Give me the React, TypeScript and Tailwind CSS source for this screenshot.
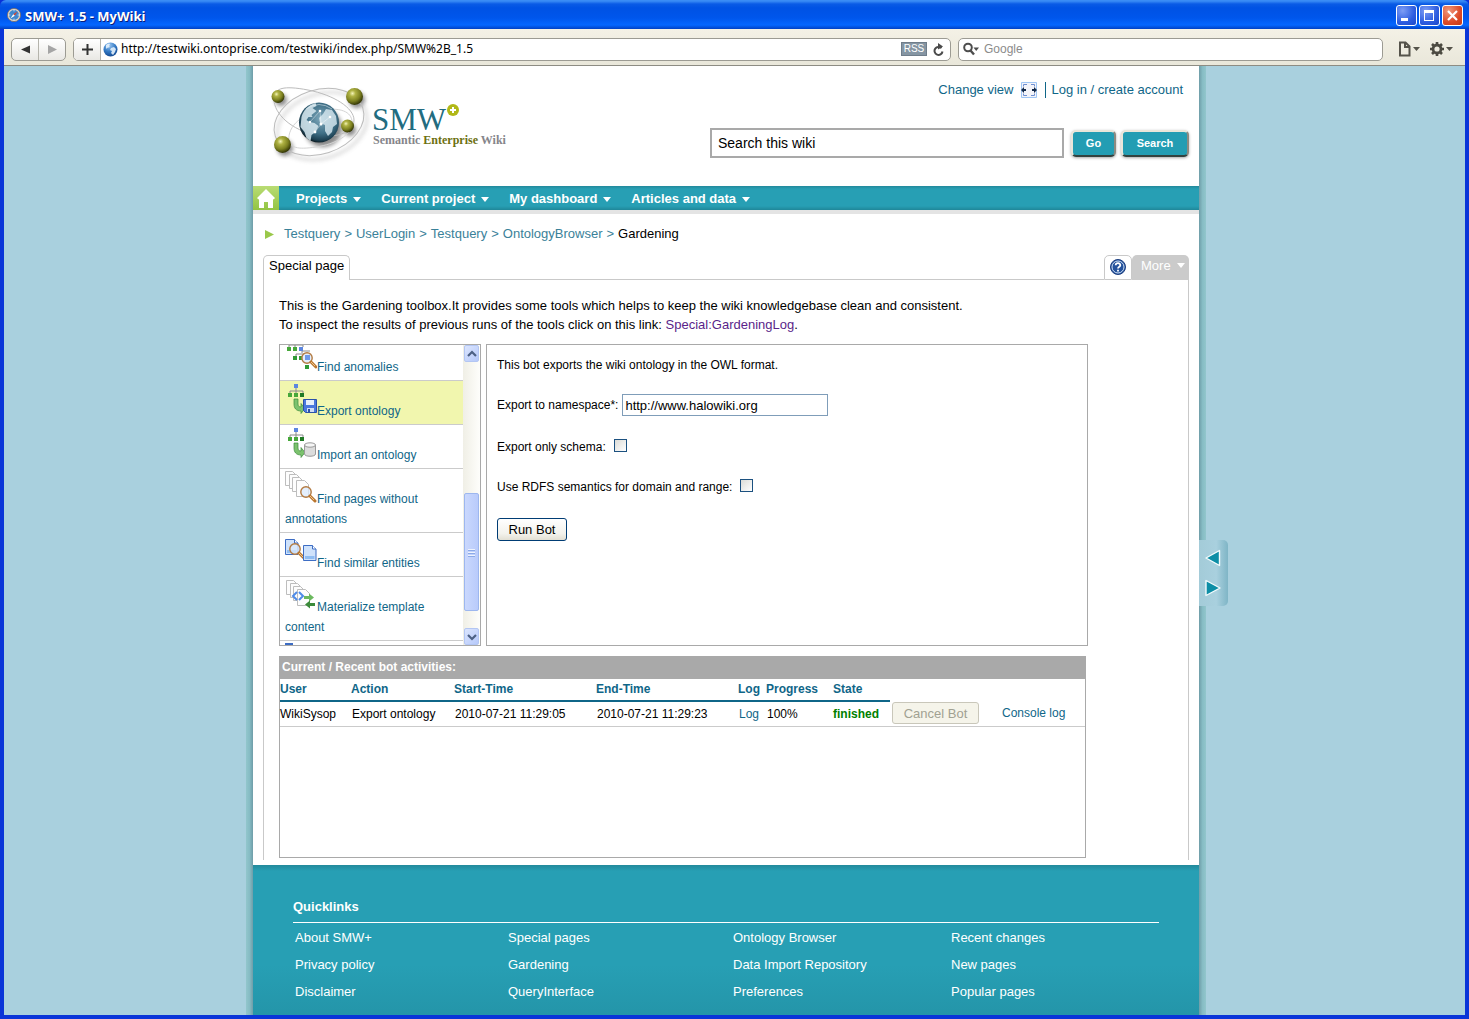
import type { ReactNode } from "react";

const linkColor = "text-[#0f6688]";

function Caret({ className = "" }: { className?: string }) {
  return (
    <svg width="8" height="5" viewBox="0 0 8 5" className={className} aria-hidden="true">
      <path d="M0 0h8L4 5z" fill="currentColor" />
    </svg>
  );
}

function CompassIcon() {
  return (
    <svg width="14" height="14" viewBox="0 0 14 14" aria-hidden="true">
      <circle cx="7" cy="7" r="6.6" fill="#d9d5cf" stroke="#7a6f68" strokeWidth="0.8" />
      <circle cx="7" cy="7" r="5" fill="#3f87cf" />
      <path d="M7 2v1.4M7 10.6V12M2 7h1.4M10.600 7H12" stroke="#e3eefa" strokeWidth="0.8" />
      <path d="M10.500 3.500 7.800 7.800 6.200 6.200z" fill="#d8452f" />
      <path d="M3.500 10.500 7.800 7.800 6.200 6.200z" fill="#fff" />
    </svg>
  );
}

function TitleBar() {
  return (
    <header className="flex h-[29px] items-center justify-between rounded-t-md bg-[linear-gradient(#3a8cf5_0,#3a8cf5_1px,#0a5be6_4px,#0052e4_8px,#0056ec_18px,#0567ff_25px,#0141c4_29px)] pl-[7px] pr-1.5">
      <div className="flex items-center gap-1">
        <CompassIcon />
        <h1 className="pt-0.5 font-['Open_Sans'] text-[13px] leading-4 font-bold text-white [text-shadow:1px_1px_0_#0b1d7a]">
          SMW+ 1.5 - MyWiki
        </h1>
      </div>
      <div className="flex gap-0.5 pt-0.5">
        <button aria-label="Minimize" className="h-[21px] w-[21px] rounded-[3px] border border-white bg-[radial-gradient(circle_at_30%_25%,#7d9df5,#2e5de0_60%,#1c48c9)]">
          <svg width="19" height="19" viewBox="0 0 19 19">
            <path d="M4 12h7v3H4z" fill="#fff" />
          </svg>
        </button>
        <button aria-label="Maximize" className="h-[21px] w-[21px] rounded-[3px] border border-white bg-[radial-gradient(circle_at_30%_25%,#7d9df5,#2e5de0_60%,#1c48c9)]">
          <svg width="19" height="19" viewBox="0 0 19 19">
            <path d="M4 4h10v11H4zM5 7v7h8V7z" fill="#fff" fillRule="evenodd" />
          </svg>
        </button>
        <button aria-label="Close" className="h-[21px] w-[21px] rounded-[3px] border border-white bg-[radial-gradient(circle_at_30%_25%,#f0997d,#dd4a27_60%,#c53a14)]">
          <svg width="19" height="19" viewBox="0 0 19 19">
            <path d="m5 5 9 9M14 5l-9 9" stroke="#fff" strokeWidth="2.200" />
          </svg>
        </button>
      </div>
    </header>
  );
}

function GlobeIcon() {
  return (
    <svg width="15" height="15" viewBox="0 0 15 15" aria-hidden="true">
      <defs>
        <radialGradient id="globe-small" cx="0.4" cy="0.2" r="0.9">
          <stop offset="0" stopColor="#9cc8f2" />
          <stop offset="0.5" stopColor="#3379c4" />
          <stop offset="1" stopColor="#0d3f86" />
        </radialGradient>
      </defs>
      <circle cx="7.500" cy="7.500" r="7" fill="url(#globe-small)" />
      <path d="M3 3c2-1.500 3-1.500 4-1l-1 2 1 1-3 1-1 1zM8 6l3-1 2 2-1 3-2 3-2-2 1-2-2-1z" fill="#e4f1fb" opacity="0.9" />
    </svg>
  );
}

function Toolbar() {
  return (
    <div className="flex h-[37px] items-center border-b border-[#8d8c83] bg-[linear-gradient(#f4f1e6,#e9e7da)] px-[7px] pt-1">
      <div className="flex h-[23px] w-[55px] divide-x divide-[#b5b4ac] rounded-[5px] border border-[#9c9b93] bg-[linear-gradient(#fff,#e9e8e4)]">
        <button aria-label="Back" className="flex flex-1 items-center justify-center">
          <svg width="9" height="9" viewBox="0 0 10 9"><path d="M10 0v9L0 4.500z" fill="#333" /></svg>
        </button>
        <button aria-label="Forward" className="flex flex-1 items-center justify-center">
          <svg width="9" height="9" viewBox="0 0 9 9"><path d="M0 0v9l9-4.500z" fill="#a5a5a5" /></svg>
        </button>
      </div>
      <div className="ml-[7px] flex h-[23px] w-[878px] items-center overflow-hidden rounded-[5px] border border-[#9c9b93] bg-white">
        <button aria-label="Add bookmark" className="flex h-full w-[27px] items-center justify-center border-r border-[#b5b4ac] bg-[linear-gradient(#fff,#e9e8e4)]">
          <svg width="11" height="11" viewBox="0 0 11 11"><path d="M5.500 0v11M0 5.500h11" stroke="#333" strokeWidth="2" /></svg>
        </button>
        <span className="pl-0.5"><GlobeIcon /></span>
        <input aria-label="Address" defaultValue="http://testwiki.ontoprise.com/testwiki/index.php/SMW%2B_1.5" className="min-w-0 flex-1 bg-transparent pl-[3px] font-['Noto_Sans'] text-[12px] leading-5 text-black outline-none" />
        <button className="h-[14px] w-[26px] border border-[#6f7d8a] bg-[#8595a3] text-[10px] leading-3 text-white">RSS</button>
        <button aria-label="Reload" className="ml-1.5 mr-1.5">
          <svg width="11" height="13" viewBox="0 0 11 13">
            <path d="M8.500 5.200A4 4 0 1 0 9.500 8.500" fill="none" stroke="#4a4a4a" strokeWidth="2" />
            <path d="M5 0l5 3.500L5 6.500z" fill="#4a4a4a" />
          </svg>
        </button>
      </div>
      <div className="ml-[7px] flex h-[23px] flex-1 items-center rounded-[5px] border border-[#9c9b93] bg-white pl-1">
        <svg width="16" height="14" viewBox="0 0 16 14" aria-hidden="true">
          <circle cx="5" cy="5.500" r="3.800" fill="none" stroke="#4d4d4d" strokeWidth="2" />
          <path d="m7.500 8.500 3.500 4" stroke="#4d4d4d" strokeWidth="2.400" />
          <path d="M10.500 5.500H16L13.200 9z" fill="#4d4d4d" />
        </svg>
        <input aria-label="Web search" placeholder="Google" className="min-w-0 flex-1 bg-transparent pl-[5px] text-[12px] leading-5 outline-none placeholder:text-[#8b8b8b]" />
      </div>
      <div className="flex items-center gap-2 pl-4 pr-[5px]">
        <button aria-label="Page menu">
          <svg width="22" height="16" viewBox="0 0 22 16">
            <path d="M1 1.500h5.500l4 4v9H1z M6 1.500v4.500h4.500" fill="none" stroke="#55534a" strokeWidth="2" />
            <path d="M14 6h7l-3.500 4z" fill="#55534a" />
          </svg>
        </button>
        <button aria-label="Settings menu">
          <svg width="24" height="16" viewBox="0 0 24 16">
            <circle cx="8" cy="8" r="4" fill="none" stroke="#4d4b42" strokeWidth="2.800" />
            <path d="M8 1v2.500M8 12.500V15M1 8h2.500M12.500 8H15M3 3l2 2M11 11l2 2M13 3l-2 2M5 11l-2 2" stroke="#4d4b42" strokeWidth="2.600" />
            <path d="M17 6h7l-3.500 4z" fill="#55534a" />
          </svg>
        </button>
      </div>
    </div>
  );
}

function AtomLogo() {
  return (
    <svg width="104" height="84" viewBox="0 0 104 84" aria-hidden="true">
      <defs>
        <radialGradient id="olive" cx="0.38" cy="0.32" r="0.7">
          <stop offset="0" stopColor="#f3f3b8" />
          <stop offset="0.25" stopColor="#b0b344" />
          <stop offset="0.65" stopColor="#7c8020" />
          <stop offset="1" stopColor="#2e3104" />
        </radialGradient>
        <radialGradient id="earth" cx="0.55" cy="0.4" r="0.62">
          <stop offset="0" stopColor="#7fa9bc" />
          <stop offset="0.6" stopColor="#3f6f86" />
          <stop offset="0.88" stopColor="#1d4052" />
          <stop offset="1" stopColor="#081419" />
        </radialGradient>
        <filter id="soft" x="-30%" y="-30%" width="170%" height="170%">
          <feGaussianBlur stdDeviation="2" />
        </filter>
      </defs>
      <g filter="url(#soft)" opacity="0.45">
        <ellipse cx="54" cy="44" rx="46" ry="32" transform="rotate(-18 54 44)" fill="none" stroke="#888" strokeWidth="2" />
        <circle cx="13" cy="18" r="6" />
        <circle cx="89" cy="18" r="8" />
        <circle cx="82" cy="48" r="6" />
        <circle cx="17" cy="66" r="8" />
        <circle cx="55" cy="46" r="19" />
      </g>
      <g fill="none" stroke="#bcbcbc">
        <ellipse cx="51" cy="40" rx="46" ry="32" transform="rotate(-18 51 40)" />
        <path d="M6 14c-2 15 14 32 38 38s42-2 42-14S66 13 40 8 8 7 6 14z" />
        <path d="M21 59c-2-15 14-28 34-31s30 3 29 14-16 20-36 23-25 0-27-6z" stroke="#d4d4d4" />
      </g>
      <circle cx="51" cy="40.500" r="20" fill="url(#earth)" />
      <path d="M33.500 35c2-7 7-12 14-14l1 3-4 2 4 3-5 4 1 2-4 0-2 3 3 2 5 1 4 3-3 6-4 3-1 6-4-3-2-6-4-5z" fill="#d9eaf1" opacity="0.85" />
      <path d="M55 32l3-5 6 1 4 6 1 8-4 3-1 5-4 4-3-5v-6l-5-2-1-5z" fill="#d9eaf1" opacity="0.8" />
      <path d="M38 27q13-9 26 0" stroke="#edf7fb" fill="none" opacity="0.5" />
      <g fill="#fff">
        <circle cx="52" cy="29" r="1.300" />
        <circle cx="53" cy="42" r="1.500" />
        <circle cx="47" cy="50" r="1.400" />
        <circle cx="62" cy="35" r="1.300" />
        <circle cx="42" cy="40" r="1.200" />
      </g>
      <path d="m52 29 1 13 9-7M53 42l-6 8M42 40l10-11" stroke="#fff" strokeWidth="0.500" fill="none" opacity="0.800" />
      <g fill="url(#olive)">
        <circle cx="10" cy="14.500" r="6.500" />
        <circle cx="86.500" cy="14.500" r="8.500" />
        <circle cx="79.500" cy="44" r="6.500" />
        <circle cx="14.500" cy="62.500" r="8.500" />
      </g>
    </svg>
  );
}

function Logo() {
  return (
    <a href="#home" className="flex items-start pl-[15px] pt-4 font-['Liberation_Serif']">
      <AtomLogo />
      <span className="block pt-6">
        <span className="flex items-start text-[31px] leading-7 text-[#226c80]">
          SMW
          <svg width="12" height="12" viewBox="0 0 12 12" className="-mt-0.5 ml-px" aria-hidden="true">
            <circle cx="6" cy="6" r="6" fill="#b1b817" />
            <path d="M6 3v6M3 6h6" stroke="#fff" strokeWidth="2" />
          </svg>
        </span>
        <span className="block pl-px text-[12px] leading-3 font-bold text-[#85858a]">
          Semantic <span className="text-[#6c7010]">Enterprise</span> Wiki
        </span>
      </span>
    </a>
  );
}

function TealButton({ children, className }: { children: ReactNode; className: string }) {
  return (
    <button className={`h-[27px] rounded-[5px] border-2 border-t-[#e9e6da] border-r-[#8d8a80] border-b-[#33423f] border-l-[#e9e6da] bg-[#239db3] text-[11px] font-bold text-white shadow-[0_1px_3px_rgba(0,0,0,0.35)] ${className}`}>
      {children}
    </button>
  );
}

function PageHeader() {
  return (
    <div className="flex h-[120px] justify-between">
      <Logo />
      <div className="flex flex-col items-end pt-3.5 pr-2.5">
        <div className={`flex items-center pr-1.5 text-[13px] leading-5 ${linkColor}`}>
          <a href="#view" className="flex items-center gap-2">
            Change view
            <svg width="16" height="16" viewBox="0 0 16 16" aria-hidden="true">
              <path d="M0.500 0.500h15v15H.5z" fill="#f3f4fa" stroke="#9fc6f5" />
              <path d="M2.500 4.500V2.500H6M10 2.500h3.500v2M13.500 11.500v2H10M6 13.500H2.500v-2" fill="none" stroke="#6f8fd0" />
              <path d="M0 8l3-3v2h2v2H3v2zM16 8l-3-3v2h-2v2h2v2z" fill="#12294a" />
            </svg>
          </a>
          <a href="#login" className="ml-2 border-l border-[#0f6688] pl-[5px] leading-4">Log in / create account</a>
        </div>
        <form className="mt-7 flex items-center gap-[5px]" onSubmit={(event) => event.preventDefault()}>
          <input aria-label="Search this wiki" defaultValue="Search this wiki" className="mr-0.5 h-[30px] w-[354px] border-2 border-[#a9a9a9] px-1.5 text-[14px] text-black outline-none" />
          <TealButton className="w-[45px]">Go</TealButton>
          <TealButton className="w-[68px]">Search</TealButton>
        </form>
      </div>
    </div>
  );
}

const navItems = ["Projects", "Current project", "My dashboard", "Articles and data"];

function MainNav() {
  return (
    <nav className="flex h-7 items-stretch border-b-4 border-[#e4e4e4] bg-[linear-gradient(#23899b_0,#279fb4_3px,#279fb4_20px,#1f8799_24px)]">
      <a href="#home" aria-label="Home" className="flex w-[26px] items-center justify-center bg-[linear-gradient(#b9dc74,#93c443)]">
        <svg width="18" height="19" viewBox="0 0 18 19">
          <path d="M9 0l9 9-1.500 1.500-.5-.4V19h-5v-6H7v6H2v-8.900l-.5.400L0 9z" fill="#fff" />
        </svg>
      </a>
      <ul className="flex items-center gap-5 pt-0.5 pl-[17px] text-[13px] font-bold text-white">
        {navItems.map((item) => (
          <li key={item}>
            <button className="flex items-center gap-1.5">
              {item}
              <Caret />
            </button>
          </li>
        ))}
      </ul>
    </nav>
  );
}

const trail = ["Testquery", "UserLogin", "Testquery", "OntologyBrowser"];

function Breadcrumb() {
  return (
    <nav aria-label="Breadcrumb" className="flex h-[41px] items-center pl-3 pb-px text-[13px] text-[#3a8199]">
      <svg width="9" height="9" viewBox="0 0 9 9" className="mr-2.5" aria-hidden="true">
        <path d="M0 0v9l9-4.500z" fill="#9ac84a" />
      </svg>
      <ol className="flex gap-1">
        {trail.map((item, index) => (
          <li key={index} className="flex gap-1">
            <a href="#trail">{item}</a>
            <span>&gt;</span>
          </li>
        ))}
        <li className="text-black">Gardening</li>
      </ol>
    </nav>
  );
}

function Tabs() {
  return (
    <div className="mx-2.5 flex h-[25px] items-end text-[13px]">
      <button className="h-[25px] rounded-t-[5px] border border-b-0 border-[#c9c9c9] px-[5px] pb-1">Special page</button>
      <div className="h-full flex-1 border-b border-[#c9c9c9]" />
      <button aria-label="Help" className="flex h-[25px] w-7 items-center justify-center rounded-t-[5px] border border-[#c9c9c9] pb-px">
        <svg width="16" height="16" viewBox="0 0 16 16">
          <circle cx="8" cy="8" r="7.500" fill="#24529c" stroke="#1d3f80" />
          <circle cx="8" cy="8" r="6" fill="none" stroke="#cfe0f5" />
          <path d="M5.700 6.300C5.700 3.500 10.300 3.500 10.300 6.200 10.300 7.800 8 7.600 8 9.600M8 10.800v1.800" fill="none" stroke="#fff" strokeWidth="1.800" />
        </svg>
      </button>
      <button className="flex h-[25px] w-[57px] items-center justify-between rounded-t-[5px] bg-[#cbcbcb] pr-1 pb-1 pl-[9px] text-white">
        More
        <Caret />
      </button>
    </div>
  );
}

function TreeNodes() {
  return (
    <>
      <path d="M11 4v4M5 11V8h13v3M11 8v3" fill="none" stroke="#8a8a8a" />
      <path d="M9 1h4v4H9z" fill="#5c86e0" />
      <path d="M3 10h4v4H3zM9 10h4v4H9z" fill="#46a83a" />
      <path d="M15 10h4v4h-4z" fill="#1f7a24" />
    </>
  );
}

function Lens({ x, y }: { x: number; y: number }) {
  return (
    <g transform={`translate(${x} ${y})`}>
      <circle cx="6" cy="6" r="5.200" fill="#dbeafc" fillOpacity="0.750" stroke="#b37a41" strokeWidth="1.400" />
      <path d="m10 10 5 5" stroke="#b9762f" strokeWidth="3" strokeLinecap="round" />
      <path d="m10 10 4 4" stroke="#f0c48b" />
    </g>
  );
}

function PageStack() {
  return (
    <g fill="#fdfdfd" stroke="#bdbdbd">
      <path d="M.5.500h7l3 3v11H.5z" />
      <path d="M4.500 3.500h7l3 3v11h-10z" />
      <path d="M7.500 6.500h7l3 3v11h-10z" />
      <path d="M11.500 9.500h8l4 4v12h-12z" />
    </g>
  );
}

function BlueDoc({ x, y }: { x: number; y: number }) {
  return (
    <g transform={`translate(${x} ${y})`}>
      <path d="M.5.500h9l3.500 3.500v11.500H.5z" fill="#cfe2fb" stroke="#3d6dc4" />
      <path d="M9.500.500v3.500H13" fill="#fff" stroke="#3d6dc4" />
      <path d="M2 11h9.500v3H2z" fill="#8fbdf2" />
    </g>
  );
}

function BotIcon({ kind }: { kind: string }) {
  return (
    <svg width="32" height="32" viewBox="0 0 32 32" className="inline-block align-baseline" aria-hidden="true">
      {kind === "anomalies" && (
        <>
          <path d="M4 8V6h14v2M10 3v5M17 14v-2h8M11 18v-3h8" fill="none" stroke="#8a8a8a" />
          <path d="M2 8h4v4H2zM8 8h4v4H8z" fill="#46a83a" />
          <path d="M14 8h4v4h-4z" fill="#5c86e0" />
          <path d="M8 17h4v4H8zM14 17h4v4h-4zM20 26h4v4h-4z" fill="#2f9a35" />
          <Lens x={16} y={13} />
          <path d="M20 16h5v5h-5z" fill="#6e98ea" />
        </>
      )}
      {(kind === "export" || kind === "import") && (
        <>
          <TreeNodes />
          <path d="M9 16h4v5c0 2 1 3 3 3v-3.500l4 5-4 5V28c-5 0-7-3-7-7z" fill="#7cc26e" stroke="#3b8a3a" strokeWidth="0.700" />
        </>
      )}
      {kind === "export" && (
        <>
          <path d="M18.500 16.500h13v13h-11l-2-2z" fill="#4a78dd" stroke="#2a51a8" />
          <path d="M21 17h8v5h-8z" fill="#e6effc" />
          <path d="M22 25h7v4h-7z" fill="#cfdcf3" />
          <path d="M23 26h2v3h-2z" fill="#2a51a8" />
        </>
      )}
      {kind === "import" && (
        <>
          <path d="M19.500 18v9c0 3 11 3 11 0v-9z" fill="#dcdcdc" stroke="#9a9a9a" />
          <ellipse cx="25" cy="18" rx="5.500" ry="2.200" fill="#f5f5f5" stroke="#9a9a9a" />
        </>
      )}
      {kind === "pages" && (
        <>
          <PageStack />
          <Lens x={15} y={15} />
        </>
      )}
      {kind === "similar" && (
        <>
          <BlueDoc x={0} y={4} />
          <Lens x={4} y={8} />
          <BlueDoc x={18} y={10} />
        </>
      )}
      {kind === "template" && (
        <>
          <g transform="translate(1 1)">
            <PageStack />
          </g>
          <path d="m12 13-4 4 4 4M14 13l4 4-4 4" fill="none" stroke="#4f8be8" strokeWidth="2" />
          <path d="M19 17h5v-2.500l5 4-5 4V20h-5z" fill="#6cb95f" />
          <path d="M30 24h-5v-2.500l-5 4 5 4V27h5z" fill="#3b8a3a" />
        </>
      )}
      {kind === "next" && <path d="M0 0h8v10H0z" fill="#3d6dc4" />}
    </svg>
  );
}

const bots = [
  { kind: "anomalies", label: "Find anomalies" },
  { kind: "export", label: "Export ontology" },
  { kind: "import", label: "Import an ontology" },
  { kind: "pages", label: "Find pages without annotations" },
  { kind: "similar", label: "Find similar entities" },
  { kind: "template", label: "Materialize template content" },
  { kind: "next", label: "" },
];

function BotList() {
  return (
    <div className="flex h-[302px] w-[202px] border border-[#a9a9a9]">
      <div className="min-w-0 flex-1 overflow-hidden">
        <ul className="-mt-2">
          {bots.map((bot) => (
            <li key={bot.kind} className={`border-b border-[#cbcbcb] pt-0.5 pr-4 pb-[3px] pl-[5px] text-[12px] leading-5 ${bot.kind === "export" ? "bg-[#f1f6ae]" : "bg-white"}`}>
              <a href={`#${bot.kind}`} className={linkColor}>
                <BotIcon kind={bot.kind} />
                {bot.label}
              </a>
            </li>
          ))}
        </ul>
      </div>
      <div className="flex w-[17px] flex-col bg-[linear-gradient(90deg,#f0efe6,#fefefb)]">
        <ScrollButton label="Scroll up" path="M1 6l4-4 4 4" />
        <div className="h-[131px]" />
        <div className="mx-px flex h-[118px] flex-col items-center justify-center gap-px rounded-[2px] border border-[#9db7ef] bg-[linear-gradient(90deg,#cad8fd,#b9cbfb)]">
          <span className="h-px w-[7px] bg-[#eef3fe] shadow-[0_1px_0_#8caae8]" />
          <span className="mt-px h-px w-[7px] bg-[#eef3fe] shadow-[0_1px_0_#8caae8]" />
          <span className="mt-px h-px w-[7px] bg-[#eef3fe] shadow-[0_1px_0_#8caae8]" />
        </div>
        <div className="flex-1" />
        <ScrollButton label="Scroll down" path="M1 2l4 4 4-4" />
      </div>
    </div>
  );
}

function ScrollButton({ label, path }: { label: string; path: string }) {
  return (
    <button aria-label={label} className="mx-px flex h-[17px] items-center justify-center rounded-[2px] border border-[#b3c6f3] bg-[linear-gradient(135deg,#dbe5fe,#b6c9fa)]">
      <svg width="10" height="8" viewBox="0 0 10 8"><path d={path} fill="none" stroke="#4d6185" strokeWidth="2.200" /></svg>
    </button>
  );
}

const checkbox =
  "mb-1 h-[13px] w-[13px] appearance-none border border-solid border-[#1c5180] bg-[linear-gradient(135deg,#dcdcd7,#fff)] checked:bg-[#21a121]";

function BotForm() {
  return (
    <form className="flex-1 border border-[#a9a9a9] px-2.5 pt-2.5 text-[12px] leading-5" onSubmit={(event) => event.preventDefault()}>
      <p>This bot exports the wiki ontology in the OWL format.</p>
      <div className="mt-[19px] flex items-center gap-1">
        <label htmlFor="namespace">Export to namespace*:</label>
        <input id="namespace" defaultValue="http://www.halowiki.org" className="h-[22px] w-[206px] border border-[#7f9db9] px-0.5 text-[13px] outline-none" />
      </div>
      <div className="mt-[21px] flex items-center gap-2">
        <label htmlFor="schema">Export only schema:</label>
        <input id="schema" type="checkbox" className={checkbox} />
      </div>
      <div className="mt-5 flex items-center gap-2">
        <label htmlFor="rdfs">Use RDFS semantics for domain and range:</label>
        <input id="rdfs" type="checkbox" className={checkbox} />
      </div>
      <button className="mt-[21px] h-[23px] w-[70px] rounded-[3px] border border-[#003c74] bg-[linear-gradient(#fff,#f3f2ec_70%,#e2dfd3)] text-[13px]">Run Bot</button>
    </form>
  );
}

const columns = ["User", "Action", "Start-Time", "End-Time", "Log", "Progress", "State"];

function Activities() {
  return (
    <section className="mt-2.5 h-[202px] max-w-[807px] border border-[#a9a9a9] text-[12px]">
      <h2 className="h-[22px] bg-[#a9a9a9] pl-0.5 leading-5 font-bold text-white">Current / Recent bot activities:</h2>
      <table className="w-full table-fixed border-collapse text-left">
        <colgroup>
          <col className="w-[71px]" />
          <col className="w-[103px]" />
          <col className="w-[142px]" />
          <col className="w-[142px]" />
          <col className="w-7" />
          <col className="w-[67px]" />
          <col className="w-[57px]" />
          <col className="w-[111px]" />
          <col />
        </colgroup>
        <thead>
          <tr className="h-[22px]">
            {columns.map((name) => (
              <th key={name} className={`border-b-2 border-[#0f6688] p-0 pb-0.5 font-bold ${linkColor}`}>{name}</th>
            ))}
            <td />
            <td />
          </tr>
        </thead>
        <tbody>
          <tr className="h-[25px] border-b border-[#cbcbcb]">
            <td className="p-0 whitespace-nowrap">WikiSysop</td>
            <td className="p-0 pl-px">Export ontology</td>
            <td className="p-0 pl-px">2010-07-21 11:29:05</td>
            <td className="p-0 pl-px">2010-07-21 11:29:23</td>
            <td className="p-0 pl-px"><a href="#log" className={linkColor}>Log</a></td>
            <td className="p-0 pl-px">100%</td>
            <td className="p-0 font-bold text-[#008000]">finished</td>
            <td className="p-0 pl-0.5">
              <button disabled className="block h-[22px] w-[87px] rounded-[3px] border border-[#c9c7ba] bg-[#f5f4ea] text-[13px] text-[#a1a192]">Cancel Bot</button>
            </td>
            <td className="p-0 pl-px"><a href="#console" className={linkColor}>Console log</a></td>
          </tr>
        </tbody>
      </table>
    </section>
  );
}

const quicklinks = [
  ["About SMW+", "Special pages", "Ontology Browser", "Recent changes"],
  ["Privacy policy", "Gardening", "Data Import Repository", "New pages"],
  ["Disclaimer", "QueryInterface", "Preferences", "Popular pages"],
];

function Footer() {
  return (
    <footer className="flex-1 bg-[linear-gradient(#23899b_0,#279fb4_6px,#279fb4_100px,#2495a9)] px-10 pt-8 text-[13px] text-white">
      <h2 className="border-b border-white pb-1.5 leading-[19px] font-bold">Quicklinks</h2>
      <ul className="mt-px grid grid-cols-[213fr_225fr_218fr_208fr] pl-0.5 leading-[27px]">
        {quicklinks.flat().map((item) => (
          <li key={item}><a href="#quick">{item}</a></li>
        ))}
      </ul>
    </footer>
  );
}

function SideSwitch() {
  return (
    <div className="absolute top-[474px] left-full flex h-[66px] w-[29px] flex-col items-start justify-center gap-3 rounded-r-[5px] bg-[linear-gradient(90deg,#a3cbd8,#a9d0de_60%,#7fb5c6)] pl-1.5">
      <button aria-label="Previous">
        <svg width="16" height="18" viewBox="0 0 16 18"><path d="M14.500 1.500v15L1 9z" fill="#0d8ea6" stroke="#f3fbfc" strokeWidth="1.400" strokeLinejoin="round" /></svg>
      </button>
      <button aria-label="Next">
        <svg width="16" height="18" viewBox="0 0 16 18"><path d="M1 1.500v15L15 9z" fill="#0d8ea6" stroke="#f3fbfc" strokeWidth="1.400" strokeLinejoin="round" /></svg>
      </button>
    </div>
  );
}

export default function App() {
  return (
    <div className="flex min-h-screen flex-col bg-[#0831d9] font-['Liberation_Sans',Arial,sans-serif] text-black">
      <TitleBar />
      <div className="flex flex-1 flex-col border-x-4 border-b-4 border-[#0a35d8]">
        <Toolbar />
        <div className="flex flex-1 justify-center bg-[#a9d0de] pr-[17px]">
          <div className="w-[7px] bg-[linear-gradient(90deg,#92c6cc,#86bcc4_50%,#6f9da8)]" />
          <main className="relative flex w-full max-w-[946px] flex-col bg-white">
            <PageHeader />
            <MainNav />
            <Breadcrumb />
            <Tabs />
            <div className="mx-2.5 mb-[5px] border-x border-[#c9c9c9] px-[15px] pt-4 pb-0.5">
              <p className="text-[13px] leading-[19px]">
                This is the Gardening toolbox.It provides some tools which helps to keep the wiki knowledgebase clean and consistent.
                <br />
                To inspect the results of previous runs of the tools click on this link: <a href="#gardeninglog" className="text-[#5a1f8a]">Special:GardeningLog</a>.
              </p>
              <div className="mt-2.5 flex max-w-[809px] gap-[5px]">
                <BotList />
                <BotForm />
              </div>
              <Activities />
            </div>
            <Footer />
            <SideSwitch />
          </main>
          <div className="w-[7px] bg-[linear-gradient(90deg,#6f9da8,#86bcc4_50%,#92c6cc)]" />
        </div>
      </div>
    </div>
  );
}
